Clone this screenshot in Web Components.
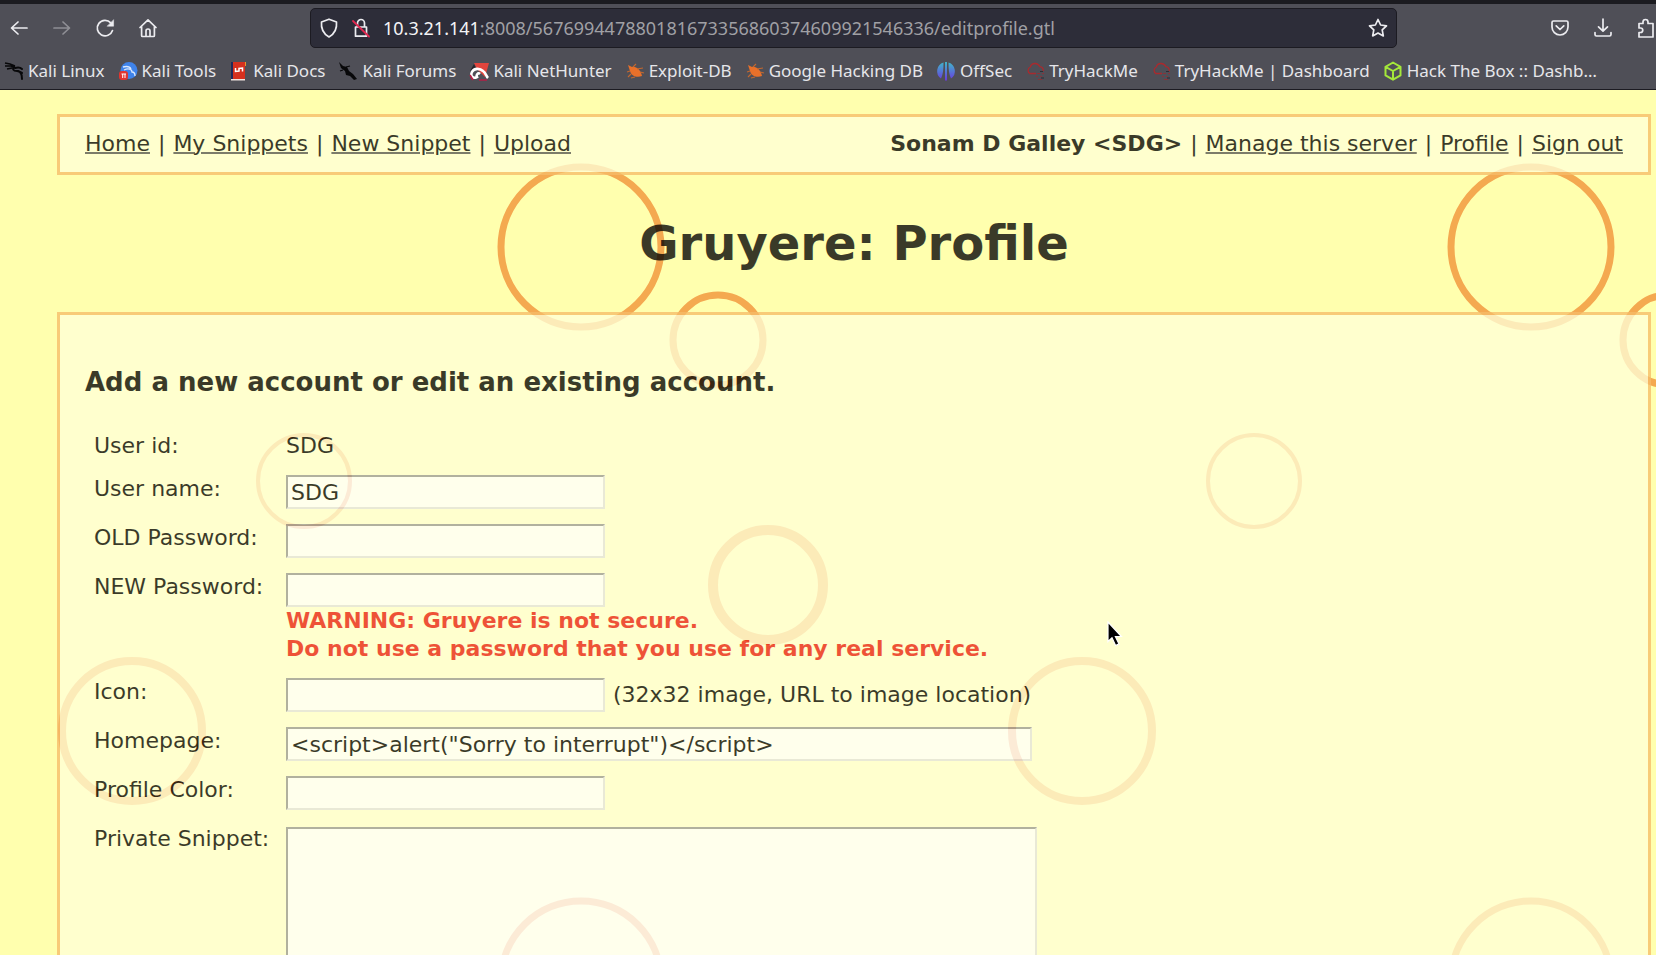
<!DOCTYPE html>
<html lang="en">
<head>
<meta charset="utf-8">
<title>Gruyere: Profile</title>
<style>
html, body { margin: 0; height: 100%; }
body { font-family: "DejaVu Sans", sans-serif; overflow: hidden; }
</style>
</head>
<body>
<browser-window>
  <browser-toolbar slot="chrome"></browser-toolbar>
  <bookmarks-bar slot="chrome"></bookmarks-bar>
  <gruyere-page>
    <menu-bar></menu-bar>
    <page-title>Gruyere: Profile</page-title>
    <content-panel>
      <span slot="heading">Add a new account or edit an existing account.</span>
      <field-row label="User id:" kind="static" value="SDG"></field-row>
      <field-row label="User name:" value="SDG"></field-row>
      <field-row label="OLD Password:" kind="password"></field-row>
      <field-row label="NEW Password:" kind="password">
        <warning-note slot="below">WARNING: Gruyere is not secure.<br>Do not use a password that you use for any real service.</warning-note>
      </field-row>
      <field-row label="Icon:"><span slot="after">(32x32 image, URL to image location)</span></field-row>
      <field-row label="Homepage:" kind="wide" value="&lt;script&gt;alert(&quot;Sorry to interrupt&quot;)&lt;/script&gt;"></field-row>
      <field-row label="Profile Color:"></field-row>
      <field-row label="Private Snippet:" kind="area"></field-row>
    </content-panel>
  </gruyere-page>
</browser-window>

<script>
class Base extends HTMLElement {
  connectedCallback() {
    if (!this.shadowRoot) this.attachShadow({ mode: 'open' }).innerHTML = this.render();
  }
}

customElements.define('browser-window', class extends Base {
  render() {
    return `<style>
      :host { display: flex; flex-direction: column; height: 100vh; overflow: hidden; position: relative; }
      header { flex: none; background: #4f4f57; border-top: 4px solid #1b1b20; border-bottom: 1px solid #1c1b22; font-family: "Noto Sans", sans-serif; }
      main { flex: 1; min-height: 0; overflow: hidden; }
      .pointer { position: absolute; left: 1107px; top: 621px; }
    </style>
    <header><slot name="chrome"></slot></header>
    <main><slot></slot></main>
    <svg class="pointer" width="16" height="26" viewBox="0 0 16 26"><path d="M1 1v19.500l4-3.800 3.600 7.800 3.400-1.600-3.600-7.400h6z" fill="#000" stroke="#fff" stroke-width="1.200"/></svg>`;
  }
});

customElements.define('browser-toolbar', class extends Base {
  render() {
    const i = (label, body, cls = '') => `<button class="${cls}" aria-label="${label}"><svg width="20" height="20" viewBox="0 0 20 20">${body}</svg></button>`;
    return `<style>
      :host { display: flex; align-items: center; height: 48px; padding: 0 0 0 9px; overflow: hidden; }
      button { border: 0; background: none; padding: 0; width: 20px; height: 20px; flex: none; color: #ececf0; }
      svg { display: block; fill: none; stroke: currentColor; stroke-width: 1.700; stroke-linecap: round; stroke-linejoin: round; }
      .dim { color: #8f8f95; }
      nav { display: flex; gap: 23px; flex: none; width: 301px; }
      .url { display: flex; align-items: center; gap: 12px; box-sizing: border-box; flex: 1; min-width: 0; height: 40px; padding: 0 8px;
        background: #2d2d39; border: 1px solid #1c1b22; border-radius: 5px; }
      .address { flex: 1; min-width: 0; overflow: hidden; white-space: nowrap; font-size: 18px; line-height: 28px; color: #a0a0a5; outline: 0; }
      .address b { font-weight: 400; color: #f4f4f7; }
      .tools { display: flex; gap: 23px; flex: none; width: 106px; margin-left: 153px; }
    </style>
    <nav>
      ${i('Back', '<path d="M18 10H3M9 4l-6.500 6L9 16"/>')}
      ${i('Forward', '<path d="M2 10h15M11 4l6.500 6L11 16"/>', 'dim')}
      ${i('Reload', '<path d="M17.500 12.500A7.800 7.800 0 1 1 15.800 4.800"/><path d="M18.600 2v6.200h-6.200z" fill="currentColor" stroke-width="0.500"/>')}
      ${i('Home', '<path d="M2 9.500 10 1.800l8 7.700M3.600 8.500v9a1 1 0 0 0 1 1h10.800a1 1 0 0 0 1-1v-9M8 18v-5a2 2 0 0 1 4 0v5"/>')}
    </nav>
    <div class="url">
      ${i('Tracking protection', '<path d="M10 1.200 17.500 4c.5 5-.5 11-7.500 15C3 15 2 9 2.500 4z"/>')}
      ${i('Connection not secure', '<path d="M4.500 9h11v9.200h-11zM6.500 9V5a3.500 3.500 0 0 1 7 0v4"/><path d="M2 3l16 15.500" stroke="#e22850" stroke-width="1.800"/>')}
      <div class="address" role="textbox" aria-label="Address" contenteditable="true" spellcheck="false"><b>10.3.21.141</b>:8008/567699447880181673356860374609921546336/editprofile.gtl</div>
      ${i('Bookmark this page', '<path d="m10 1.500 2.600 5.500 5.900.8-4.300 4.100 1.100 6L10 15l-5.300 2.900 1.100-6L1.500 7.800 7.400 7z"/>')}
    </div>
    <div class="tools">
      ${i('Save to Pocket', '<path d="M3.500 3h13a1.500 1.500 0 0 1 1.500 1.500V9a8 8 0 0 1-16 0V4.500A1.500 1.500 0 0 1 3.500 3zM6.200 7.800 10 11.500l3.800-3.700"/>')}
      ${i('Downloads', '<path d="M10 1v12M5.500 8.800 10 13.200l4.500-4.400M2 14.500v2A1.500 1.500 0 0 0 3.500 18h13a1.500 1.500 0 0 0 1.500-1.500v-2"/>')}
      ${i('Extensions', '<path d="M3 5.500h4V4a2.500 2.500 0 0 1 5 0v1.500h5V19H3v-4.500h1.500a2.200 2.200 0 0 0 0-4.500H3z"/>')}
    </div>`;
  }
});

const dragon = '<path d="M1 2l5 1 5 2M1 5l6 0 5 2M3 8l5-1" fill="none" stroke="#08080a" stroke-width="1.600"/><path d="M10 5c-2 3-1 5 3 5 3 0 5 3 5 8M11 7c3-1 5-1 7 1M14 10l4 2" fill="none" stroke="#08080a" stroke-width="2" stroke-linecap="round"/>';
const bug = '<path d="M3 4 7 6c4-1 9 3 10 9-5 2-11 0-12-5z" fill="#e8702a"/><path d="M8 6l3-3M12 8l6-1M15 11l4 1M5 10l-3 1M6 13l-3 3M10 16l-4 1" stroke="#c4682f" stroke-width="1.100"/>';
const cloud = '<path d="M5 12.500a3.600 3.600 0 0 1 .3-6.500 5 5 0 0 1 9.400-.4 3.600 3.600 0 0 1 3.500 4.500M4 12.500h7" fill="none" stroke="#a92a2e" stroke-width="1.300"/><path d="M12 12.500h3m2 0h2M11 15.500h2m2 0h2M13 18.500h4" stroke="#87333a" stroke-width="1.200"/><path d="M15 10.500h3M16 17h3" stroke="#2b2f38"/>';
const BOOKMARKS = [
  ['Kali Linux', dragon],
  ['Kali Tools', '<circle cx="11" cy="9.500" r="8.500" fill="#3f83ea"/><path d="M5 6c4-1 7 0 8 2M6 9c4-2 8-1 8 2 2 0 3 2 3 4" fill="none" stroke="#d9e8ff" stroke-width="1.300"/><rect x="1" y="10" width="9" height="9" rx="3" fill="#e2352f"/><path d="M3.500 13h4.500M4.700 13v4M7 13v4" stroke="#fff"/>'],
  ['Kali Docs', '<path d="M2 1h3v17H2z" fill="#20295a"/><path d="M4 1h12v17H4z" fill="#d5301f"/><path d="M16 1h1v4h-1z" fill="#e39a2c"/><path d="M2 18h14v1.500H2z" fill="#f1e4e0"/><path d="M6.500 7v3.500l3.500-.5V7.500l3.500-.5v3.500" fill="none" stroke="#fff" stroke-width="1.500"/>'],
  ['Kali Forums', '<path d="M1 1l4 4 4 1 2 4 4 3 4 5-3 1-4-4-4-1-1-4-4-3z" fill="#08080a"/><path d="M8 6l4-1M5 9l-3 1" stroke="#08080a" stroke-width="1.200"/>'],
  ['Kali NetHunter', '<path d="M5 2h15l-4 14-8-8z" fill="#e2453d"/><path d="M1 10 5 3l2 4z" fill="#26262c"/><path d="M11 13c-2-2-4 1-3 3 -4 2-7-1-5-5 2-4 8-4 11-1 3 2 3 5 5 7" fill="none" stroke="#fff" stroke-width="2.600"/><path d="M1 14l3 5M10 19h8" stroke="#b51f45" stroke-width="1.600"/>'],
  ['Exploit-DB', bug],
  ['Google Hacking DB', bug],
  ['OffSec', '<defs><linearGradient id="g" x2="0" y2="1"><stop stop-color="#3fb7c9"/><stop offset="1" stop-color="#6b35e0"/></linearGradient></defs><path d="M7.500 1.500A9 9 0 0 0 5 17.500c2-4 2.500-9 2.500-16zM12.500 1.500A9 9 0 0 1 15 17.500c-2-4-2.500-9-2.500-16zM9 1h2v18l-1 1-1-1z" fill="url(#g)"/>'],
  ['TryHackMe', cloud],
  ['TryHackMe | Dashboard', cloud],
  ['Hack The Box :: Dashb…', '<path d="m10 1.500 7.500 4.300v8.600L10 18.700l-7.500-4.300V5.800zM2.500 5.800 10 10l7.500-4.200M10 10v8.700" fill="none" stroke="#a4e83a" stroke-width="2" stroke-linejoin="round"/>'],
];

customElements.define('bookmarks-bar', class extends Base {
  render() {
    return `<style>
      :host { display: flex; align-items: center; gap: 13px; height: 37px; padding: 0 4px; overflow: hidden; }
      a { display: flex; align-items: center; gap: 4px; flex: none; color: #e6e6ea; text-decoration: none; font-size: 17px; line-height: 24px; white-space: nowrap; }
      svg { display: block; flex: none; }
    </style>` + BOOKMARKS.map(([t, s]) => `<a href="#"><svg width="20" height="20" viewBox="0 0 20 20">${s}</svg>${t}</a>`).join('');
  }
});

customElements.define('gruyere-page', class extends Base {
  render() {
    return `<style>
      :host { display: block; position: relative; min-height: 100%; background: #ffffae; color: #000; }
      .holes { position: absolute; inset: 0; width: 100%; height: 100%; }
      .sheet { position: relative; opacity: 0.77; padding: 24px 5px 24px 57px; font-size: 22px; line-height: 28px; }
    </style>
    <svg class="holes" aria-hidden="true">
      <defs><pattern id="cheese" patternUnits="userSpaceOnUse" x="50" y="59" width="950" height="734">
        <g fill="none" stroke="#f4a950">
          <circle cx="531" cy="98" r="80" stroke-width="7"/>
          <circle cx="668" cy="191" r="45" stroke-width="7"/>
          <circle cx="254" cy="332" r="46" stroke-width="4"/>
          <circle cx="718" cy="436" r="55" stroke-width="10"/>
          <circle cx="82" cy="582" r="70" stroke-width="8"/>
        </g>
      </pattern></defs>
      <rect width="100%" height="100%" fill="url(#cheese)"/>
    </svg>
    <div class="sheet"><slot></slot></div>`;
  }
});

customElements.define('menu-bar', class extends Base {
  render() {
    return `<style>
      :host { display: flex; justify-content: space-between; flex-wrap: wrap; padding: 13px 25px 14px; border: 3px solid #f6bc69; background: #ffffd8; }
      nav { display: flex; flex-wrap: wrap; gap: 8px; }
      a { color: inherit; text-decoration-color: #555; text-decoration-thickness: 2px; }
    </style>
    <nav><a href="#">Home</a> | <a href="#">My Snippets</a> | <a href="#">New Snippet</a> | <a href="#">Upload</a></nav>
    <nav><b>Sonam D Galley &lt;SDG&gt;</b> | <a href="#">Manage this server</a> | <a href="#">Profile</a> | <a href="#">Sign out</a></nav>`;
  }
});

customElements.define('page-title', class extends Base {
  render() {
    return `<style>
      :host { display: block; }
      h1 { margin: 0; padding: 38px 0 39px; font-size: 48px; line-height: 60px; text-align: center; }
    </style><h1><slot></slot></h1>`;
  }
});

customElements.define('content-panel', class extends Base {
  render() {
    return `<style>
      :host { display: block; padding: 52px 25px 40px; border: 3px solid #f6bc69; background: #ffffd8; }
      h3 { margin: 0 0 35px; font-size: 26px; line-height: 30px; }
      form { display: flex; flex-direction: column; gap: 15px; padding-left: 9px; }
    </style>
    <h3><slot name="heading"></slot></h3>
    <form><slot></slot></form>`;
  }
});

customElements.define('field-row', class extends Base {
  render() {
    const kind = this.getAttribute('kind') || 'text';
    const value = (this.getAttribute('value') || '').replace(/&/g, '&amp;').replace(/"/g, '&quot;').replace(/</g, '&lt;');
    const label = this.getAttribute('label');
    const control = kind === 'static' ? `<output id="c">${value}</output>`
      : kind === 'area' ? '<textarea id="c"></textarea>'
      : `<input id="c" class="${kind}" type="${kind === 'password' ? 'password' : 'text'}" value="${value}" autocomplete="off">`;
    return `<style>
      :host { display: grid; grid-template-columns: 192px 1fr; align-items: start; }
      .line { display: flex; align-items: center; gap: 8px; }
      input, textarea { box-sizing: border-box; margin: 0; font: inherit; color: inherit; background: #fff; border: 2px solid; border-color: #9a9a9a #e3e3e3 #e3e3e3 #9a9a9a; border-radius: 0; outline: 0; }
      input { width: 319px; height: 34px; padding: 0 3px; }
      .wide { width: 746px; }
      textarea { display: block; width: 751px; height: 260px; padding: 3px; resize: none; margin-top: 2px; }
    </style>
    <label for="c">${label}</label>
    <div><div class="line">${control}<slot name="after"></slot></div><slot name="below"></slot></div>`;
  }
});

customElements.define('warning-note', class extends Base {
  render() {
    return `<style>:host { display: block; font-weight: 700; color: #ea1f14; }</style><slot></slot>`;
  }
});
</script>
</body>
</html>
